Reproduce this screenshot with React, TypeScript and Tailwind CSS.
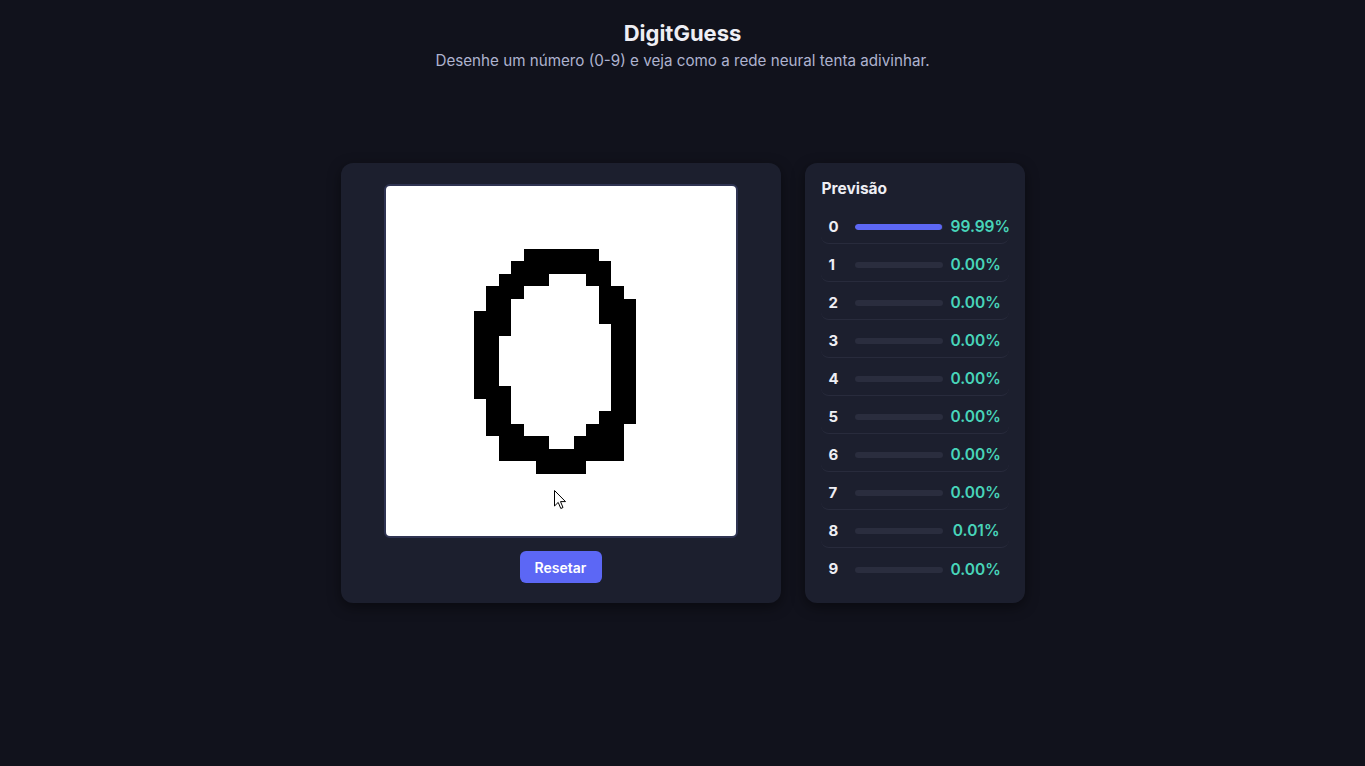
import React from 'react';

// 28x28 grid, [row, fromCol, toCol] inclusive
const strokes: [number, number, number][] = [
  [5, 11, 16],
  [6, 10, 17],
  [7, 9, 12], [7, 16, 17],
  [8, 8, 10], [8, 17, 18],
  [9, 8, 9], [9, 17, 19],
  [10, 7, 9], [10, 17, 19],
  [11, 7, 9], [11, 18, 19],
  [12, 7, 8], [12, 18, 19],
  [13, 7, 8], [13, 18, 19],
  [14, 7, 8], [14, 18, 19],
  [15, 7, 8], [15, 18, 19],
  [16, 7, 9], [16, 18, 19],
  [17, 8, 9], [17, 18, 19],
  [18, 8, 9], [18, 17, 19],
  [19, 8, 10], [19, 16, 18],
  [20, 9, 12], [20, 15, 18],
  [21, 9, 18],
  [22, 12, 15],
];

const predictions = [
  { digit: 0, value: 99.99 },
  { digit: 1, value: 0 },
  { digit: 2, value: 0 },
  { digit: 3, value: 0 },
  { digit: 4, value: 0 },
  { digit: 5, value: 0 },
  { digit: 6, value: 0 },
  { digit: 7, value: 0 },
  { digit: 8, value: 0.01 },
  { digit: 9, value: 0 },
];

export default function App() {
  return (
    <div className="min-h-screen bg-[#11121c] pt-[19px] font-['Inter',sans-serif]">
      <header className="text-center">
        <h1 className="text-[22px] leading-7 font-bold text-[#eeeef4]">DigitGuess</h1>
        <p className="mt-1 text-[15.2px] leading-5 text-[#aeb2cf]">
          Desenhe um número (0-9) e veja como a rede neural tenta adivinhar.
        </p>
      </header>

      <main className="mt-[92px] flex justify-center gap-6">
        {/* Área de desenho */}
        <section className="w-[440px] bg-[#1c1f2e] rounded-xl shadow-[0_4px_14px_rgba(0,0,0,0.45)] pt-[21px] pb-5 flex flex-col items-center">
          <div className="relative w-[354px] h-[354px] border-2 border-[#2f3452] rounded-md bg-white overflow-hidden">
            <svg width="350" height="350" viewBox="0 0 28 28" shapeRendering="crispEdges" className="block">
              {strokes.map(([r, a, b], i) => (
                <rect key={i} x={a} y={r} width={b - a + 1} height={1} fill="#000" />
              ))}
            </svg>
            <svg
              width="13"
              height="20"
              viewBox="0 0 13 20"
              className="absolute left-[168px] top-[304px]"
            >
              <path
                d="M0.5 0.5 L0.5 16 L4.2 12.4 L6.8 18.5 L9 17.5 L6.5 11.6 L11.5 11.6 Z"
                fill="#fff"
                stroke="#000"
                strokeWidth="1"
                strokeLinejoin="miter"
              />
            </svg>
          </div>
          <button className="mt-[13px] w-[82px] h-8 rounded-md bg-[#5c67f5] text-white text-[14px] font-semibold">
            Resetar
          </button>
        </section>

        {/* Previsão */}
        <section className="w-[220px] bg-[#1c1f2e] rounded-xl shadow-[0_4px_14px_rgba(0,0,0,0.45)] px-4 pt-4">
          <h2 className="text-[15.5px] leading-5 font-bold text-[#eeeef4] mb-3 pl-px">Previsão</h2>
          <div className="flex flex-col gap-[5px]">
            {predictions.map((p) => (
              <div
                key={p.digit}
                className="h-[33px] flex items-center gap-2 px-2 rounded-lg border-b border-[#282b3c] last:border-b-0"
              >
                <span className="w-[18px] text-[15px] font-bold text-[#eeeef4]">{p.digit}</span>
                <div className="w-[88px] h-[6px] rounded-full bg-[#2a2d3e] overflow-hidden">
                  <div className="h-full rounded-full bg-[#5c67f5]" style={{ width: `${p.value}%` }} />
                </div>
                <span className="w-[49px] text-right whitespace-nowrap text-[15.5px] font-semibold text-[#48d4b9]">
                  {p.value.toFixed(2)}%
                </span>
              </div>
            ))}
          </div>
        </section>
      </main>
    </div>
  );
}
